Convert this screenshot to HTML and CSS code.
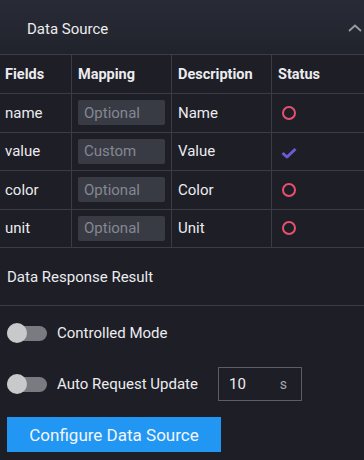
FILE: index.html
```html
<!DOCTYPE html>
<html lang="en">
  <head>
    <meta charset="UTF-8" />
    <meta name="viewport" content="width=device-width, initial-scale=1.0" />
    <title>Data Source</title>
    <link rel="stylesheet" href="styles.css">
  </head>
  <body>
    <section class="panel">
      <div class="panel-head">
        <span>Data Source</span>
        <svg class="chevron" width="14" height="8" viewBox="0 0 14 8">
          <polyline points="1,7 7,1.5 13,7" fill="none" stroke="#9a9ca4" stroke-width="1.8" />
        </svg>
      </div>

      <table class="fields">
        <thead>
          <tr>
            <th>Fields</th>
            <th>Mapping</th>
            <th>Description</th>
            <th>Status</th>
          </tr>
        </thead>
        <tbody>
          <tr>
            <td>name</td>
            <td><input class="map" placeholder="Optional" /></td>
            <td>Name</td>
            <td><span class="dot"></span></td>
          </tr>
          <tr>
            <td>value</td>
            <td><input class="map" placeholder="Custom" /></td>
            <td>Value</td>
            <td>
              <svg class="tick" width="16" height="12" viewBox="0 0 16 12">
                <polyline points="1.5,6 6,10 14.5,2" fill="none" stroke="#6d5bd6" stroke-width="3" stroke-linejoin="round" />
              </svg>
            </td>
          </tr>
          <tr>
            <td>color</td>
            <td><input class="map" placeholder="Optional" /></td>
            <td>Color</td>
            <td><span class="dot"></span></td>
          </tr>
          <tr>
            <td>unit</td>
            <td><input class="map" placeholder="Optional" /></td>
            <td>Unit</td>
            <td><span class="dot"></span></td>
          </tr>
        </tbody>
      </table>

      <div class="result">Data Response Result</div>

      <div class="settings">
        <div class="option">
          <span class="switch"><span class="knob"></span></span>
          <span>Controlled Mode</span>
        </div>
        <div class="option auto">
          <span class="switch"><span class="knob"></span></span>
          <span>Auto Request Update</span>
          <div class="interval">
            <span>10</span>
            <span class="unit">s</span>
          </div>
        </div>
        <button class="configure">Configure Data Source</button>
      </div>
    </section>
  </body>
</html>
```

FILE: styles.css
```css
body {
  margin: 0;
  background: #1d1e26;
  color: #ececef;
  font-family: Roboto, "Liberation Sans", sans-serif;
  font-size: 15px;
}
.panel-head {
  height: 55px;
  padding: 3px 2px 0 27px;
  box-sizing: border-box;
  display: flex;
  align-items: center;
  justify-content: space-between;
  background: linear-gradient(#282b36, #21232c);
  border-bottom: 1px solid #3b3d47;
}
.chevron {
  margin-top: -2px;
}
.fields {
  width: 100%;
  border-collapse: collapse;
  table-layout: fixed;
}
.fields th,
.fields td {
  border: 1px solid #3a3c46;
  padding: 0 0 0 6px;
  text-align: left;
}
.fields th:first-child,
.fields td:first-child {
  border-left: none;
  width: 66px;
  padding-left: 5px;
}
.fields th:last-child,
.fields td:last-child {
  border-right: none;
}
.fields th:nth-child(2),
.fields th:nth-child(3) {
  width: 93px;
}
.fields th {
  height: 38px;
  font-size: 14.5px;
  font-weight: bold;
  border-top: none;
}
.fields td {
  height: 37.5px;
}
.map {
  width: 87px;
  height: 25px;
  box-sizing: border-box;
  border: none;
  border-radius: 2px;
  background: #393b44;
  padding: 0 6px;
  font-family: inherit;
  font-size: 15px;
  color: #e0e0e0;
  display: block;
}
.map::placeholder {
  color: #858791;
}
.dot {
  display: block;
  width: 10px;
  height: 10px;
  margin-left: 4px;
  border: 2.5px solid #e9506d;
  border-radius: 50%;
}
.tick {
  display: block;
  margin: 4px 0 0 3px;
}
.result {
  height: 57px;
  padding-left: 7px;
  display: flex;
  align-items: center;
  border-bottom: 1px solid #3a3c46;
}
.settings {
  padding: 17px 7px 0;
}
.option {
  display: flex;
  align-items: center;
  gap: 10px;
  height: 20px;
}
.option.auto {
  height: 34px;
  margin-top: 24px;
}
.switch {
  position: relative;
  width: 40px;
  height: 15px;
  border-radius: 8px;
  background: #7a7b81;
}
.knob {
  position: absolute;
  left: 0;
  top: -2.5px;
  width: 20px;
  height: 20px;
  border-radius: 50%;
  background: #c9c9cc;
}
.interval {
  margin-left: 10px;
  width: 84px;
  height: 34px;
  box-sizing: border-box;
  border: 1px solid #5b5e67;
  display: flex;
  align-items: center;
  justify-content: space-between;
  padding: 0 14px 0 10px;
  font-size: 15px;
}
.unit {
  color: #a7a9b0;
  font-size: 14px;
}
.configure {
  margin-top: 16px;
  width: 214px;
  height: 35px;
  border: none;
  background: #2196f3;
  color: #f2f6fb;
  font-family: inherit;
  font-size: 17px;
}
```
